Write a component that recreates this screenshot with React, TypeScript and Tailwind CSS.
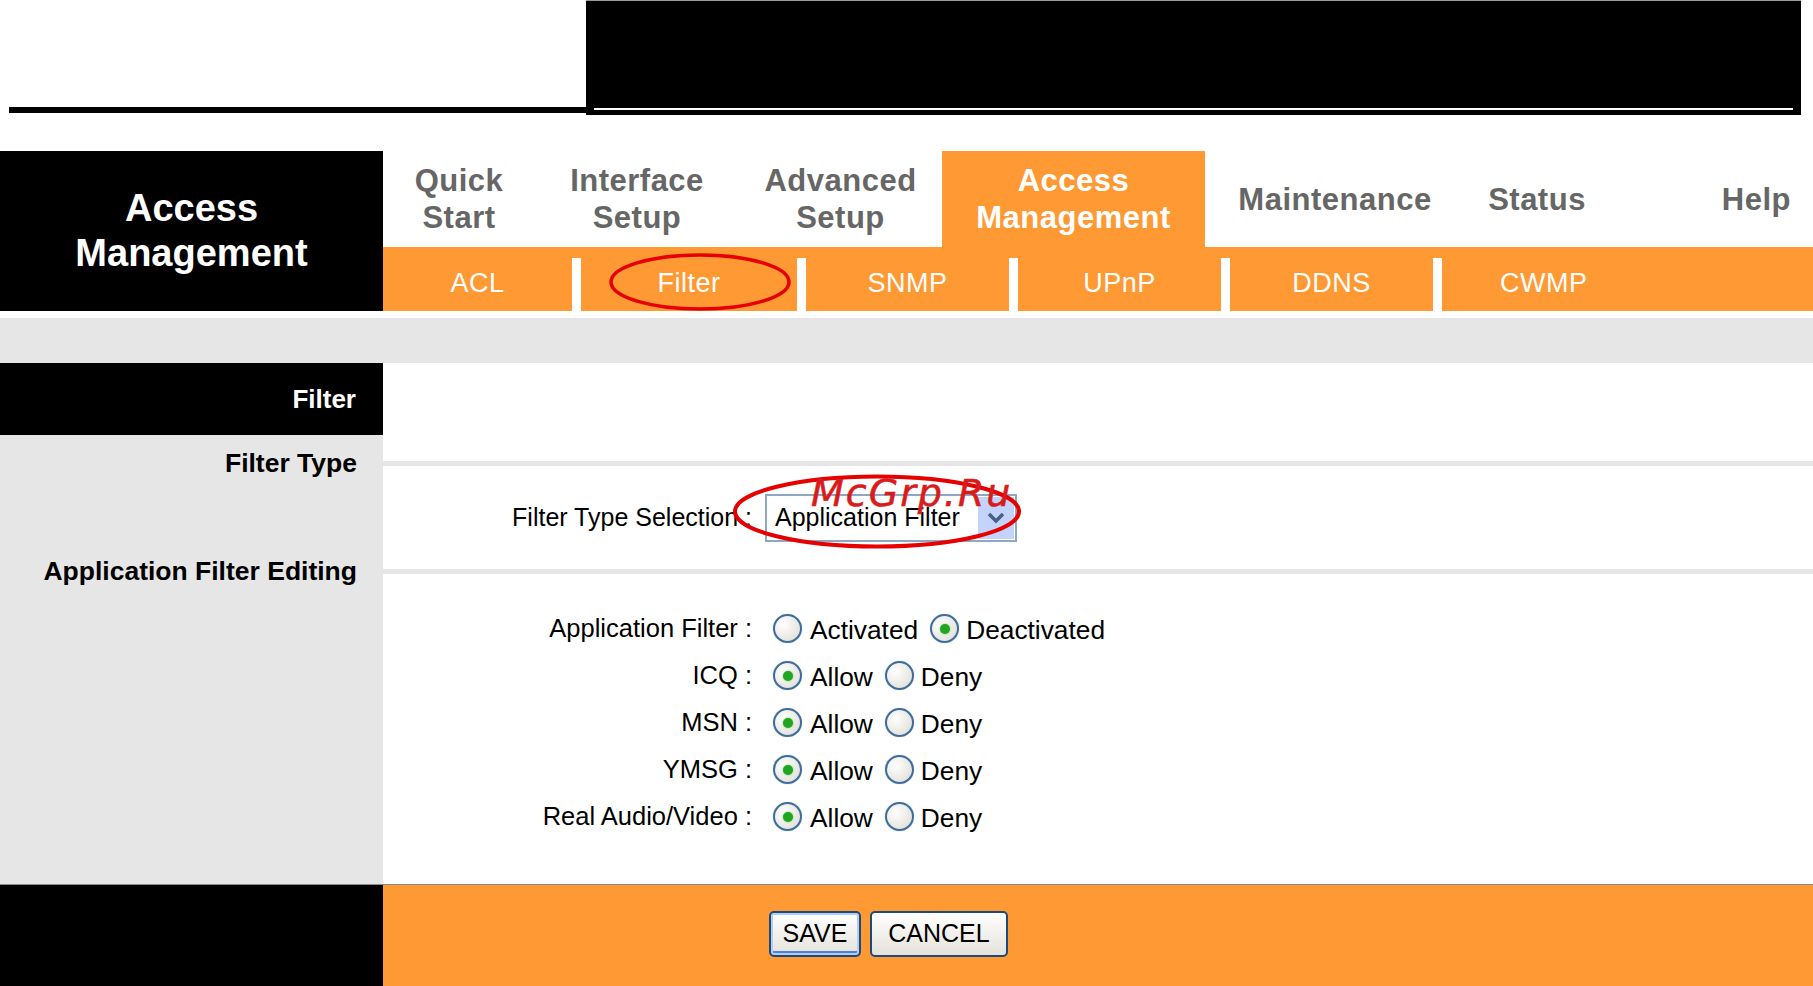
import React from 'react';

const ORANGE = 'bg-[#ff9933]';

interface NavItem {
  lines: string[];
  width: string;
  active?: boolean;
  extra?: string;
}

const topNav: NavItem[] = [
  { lines: ['Quick', 'Start'], width: 'w-[152px]' },
  { lines: ['Interface', 'Setup'], width: 'w-[204px]' },
  { lines: ['Advanced', 'Setup'], width: 'w-[203px]' },
  { lines: ['Access', 'Management'], width: 'w-[263px]', active: true },
  { lines: ['Maintenance'], width: 'w-[260px]' },
  { lines: ['Status'], width: 'w-[144px]' },
  { lines: ['Help'], width: 'flex-1', extra: 'justify-end pr-[22px]' },
];

const subNav = [
  { label: 'ACL', width: 'w-[189px]' },
  { label: 'Filter', width: 'w-[216px]' },
  { label: 'SNMP', width: 'w-[203px]' },
  { label: 'UPnP', width: 'w-[203px]' },
  { label: 'DDNS', width: 'w-[203px]' },
];

const Radio: React.FC<{ checked?: boolean }> = ({ checked }) => (
  <span className="flex h-[29px] w-[29px] shrink-0 items-center justify-center rounded-full border-2 border-[#3d6d9c] bg-[radial-gradient(circle_at_35%_35%,#ffffff,#dcd9cf)] shadow-[0_0_1px_#7fa3c8]">
    {checked && <span className="h-[10px] w-[10px] rounded-full bg-[#22a622] shadow-[0_0_2px_#4cd04c]" />}
  </span>
);

const RadioRow: React.FC<{ label: string; options: [string, string]; first: boolean }> = ({
  label,
  options,
  first,
}) => (
  <div className="flex h-[47px] items-center">
    <span className="w-[369px] text-right text-[25.5px]">{label} :</span>
    <span className="ml-[21px] flex items-center text-[26.3px]">
      <Radio checked={first} />
      <span className="ml-[8px] mt-[4px]">{options[0]}</span>
      <span className="ml-[12px]">
        <Radio checked={!first} />
      </span>
      <span className="ml-[7px] mt-[4px]">{options[1]}</span>
    </span>
  </div>
);

export default function App() {
  return (
    <div className="relative h-[986px] w-[1813px] overflow-hidden bg-white font-['Liberation_Sans',Arial,sans-serif]">
      {/* banner */}
      <div className="flex h-[151px] items-start">
        <div className="ml-[9px] mt-[107px] h-[6px] w-[577px] bg-black" />
        <div className="flex h-[115px] w-[1215px] flex-col justify-end border-t border-[#9a9a9a] bg-black px-[8px] pb-[5px]">
          <div className="h-[2px] bg-white" />
        </div>
      </div>

      {/* header */}
      <div className="flex h-[160px]">
        <div className="flex w-[383px] flex-col items-center justify-center bg-black text-[38px] font-bold leading-[45px] text-white">
          <span>Access</span>
          <span>Management</span>
        </div>
        <div className="flex flex-1 flex-col">
          <div className="flex h-[96px] text-[31px] font-bold leading-[37px] tracking-[0.5px] text-[#666666]">
            {topNav.map((item) => (
              <div
                key={item.lines.join(' ')}
                className={`flex ${item.width} ${item.extra ?? 'justify-center'} items-center ${
                  item.active ? `${ORANGE} text-white` : ''
                }`}
              >
                <div className="flex flex-col items-center">
                  {item.lines.map((l) => (
                    <span key={l}>{l}</span>
                  ))}
                </div>
              </div>
            ))}
          </div>
          <div className={`flex h-[64px] ${ORANGE} text-[27px] tracking-[0.5px] text-white`}>
            {subNav.map((s) => (
              <React.Fragment key={s.label}>
                <div className={`flex ${s.width} items-center justify-center pt-[9px]`}>{s.label}</div>
                <div className="h-[53px] w-[9px] self-end bg-white" />
              </React.Fragment>
            ))}
            <div className="flex flex-1 items-center pl-[58px] pt-[9px]">CWMP</div>
          </div>
        </div>
      </div>

      <div className="h-[7px]" />
      <div className="h-[45px] bg-[#e6e6e6]" />

      {/* main */}
      <div className="flex h-[521px] text-[25px] text-black">
        <div className="flex w-[383px] flex-col text-[26.5px] font-bold">
          <div className="flex h-[72px] items-center justify-end bg-black pr-[27px] text-[26px] text-white">Filter</div>
          <div className="flex flex-1 flex-col items-end bg-[#e6e6e6] pr-[26px] pt-[13px] leading-[30px]">
            <span>Filter Type</span>
            <span className="mt-[78px]">Application Filter Editing</span>
          </div>
        </div>
        <div className="flex flex-1 flex-col">
          <div className="h-[72px]" />
          <div className="flex h-[56px] items-center">
            <div className="h-[5px] w-full bg-[#e6e6e6]" />
          </div>
          <div className="flex h-[54px] items-center">
            <span className="w-[369px] text-right">Filter Type Selection :</span>
            <div className="ml-[13px] flex h-[48px] w-[252px] items-center border-2 border-[#8ea8c4] bg-white">
              <span className="flex-1 pl-[8px]">Application Filter</span>
              <span className="mr-[1px] flex h-[42px] w-[36px] items-center justify-center bg-[#c3d4fc]">
                <svg width="20" height="14" viewBox="0 0 20 14">
                  <path d="M3 3 L10 10 L17 3" fill="none" stroke="#4a5f86" strokeWidth="3.5" />
                </svg>
              </span>
            </div>
          </div>
          <div className="flex h-[52px] items-center">
            <div className="h-[5px] w-full bg-[#e6e6e6]" />
          </div>
          <div className="h-[8px]" />
          <RadioRow label="Application Filter" options={['Activated', 'Deactivated']} first={false} />
          <RadioRow label="ICQ" options={['Allow', 'Deny']} first />
          <RadioRow label="MSN" options={['Allow', 'Deny']} first />
          <RadioRow label="YMSG" options={['Allow', 'Deny']} first />
          <RadioRow label="Real Audio/Video" options={['Allow', 'Deny']} first />
        </div>
      </div>

      {/* footer */}
      <div className="flex h-[102px] border-t border-[#8a8a8a]">
        <div className="w-[383px] bg-black" />
        <div className={`flex flex-1 items-start gap-[9px] ${ORANGE} pl-[386px] pt-[26px] text-[25px] text-black`}>
          <button className="flex h-[46px] w-[92px] items-center justify-center rounded-[5px] border-2 border-[#1d4a7c] bg-gradient-to-b from-white to-[#e4e2da] shadow-[inset_0_0_0_2px_#b4cdf4,inset_0_-4px_0_#4f80de]">
            SAVE
          </button>
          <button className="flex h-[46px] w-[138px] items-center justify-center rounded-[5px] border-2 border-[#1d4a7c] bg-gradient-to-b from-white to-[#e4e2da]">
            CANCEL
          </button>
        </div>
      </div>

      {/* annotation overlays */}
      <svg className="absolute left-[608px] top-[252px]" width="184" height="60" viewBox="0 0 184 60">
        <ellipse cx="92" cy="30" rx="89" ry="27" fill="none" stroke="#e60000" strokeWidth="3.5" />
      </svg>
      <svg className="absolute left-[731px] top-[473px]" width="292" height="77" viewBox="0 0 292 77">
        <ellipse cx="146" cy="38.5" rx="142" ry="35" fill="none" stroke="#e60000" strokeWidth="4" />
      </svg>
      <span className="absolute left-[811px] top-[474px] font-['DejaVu_Sans',sans-serif] text-[38px] italic leading-[38px] tracking-[2px] text-[#d81c1c] [-webkit-text-stroke:0.6px_#d81c1c]">
        McGrp.Ru
      </span>
    </div>
  );
}
